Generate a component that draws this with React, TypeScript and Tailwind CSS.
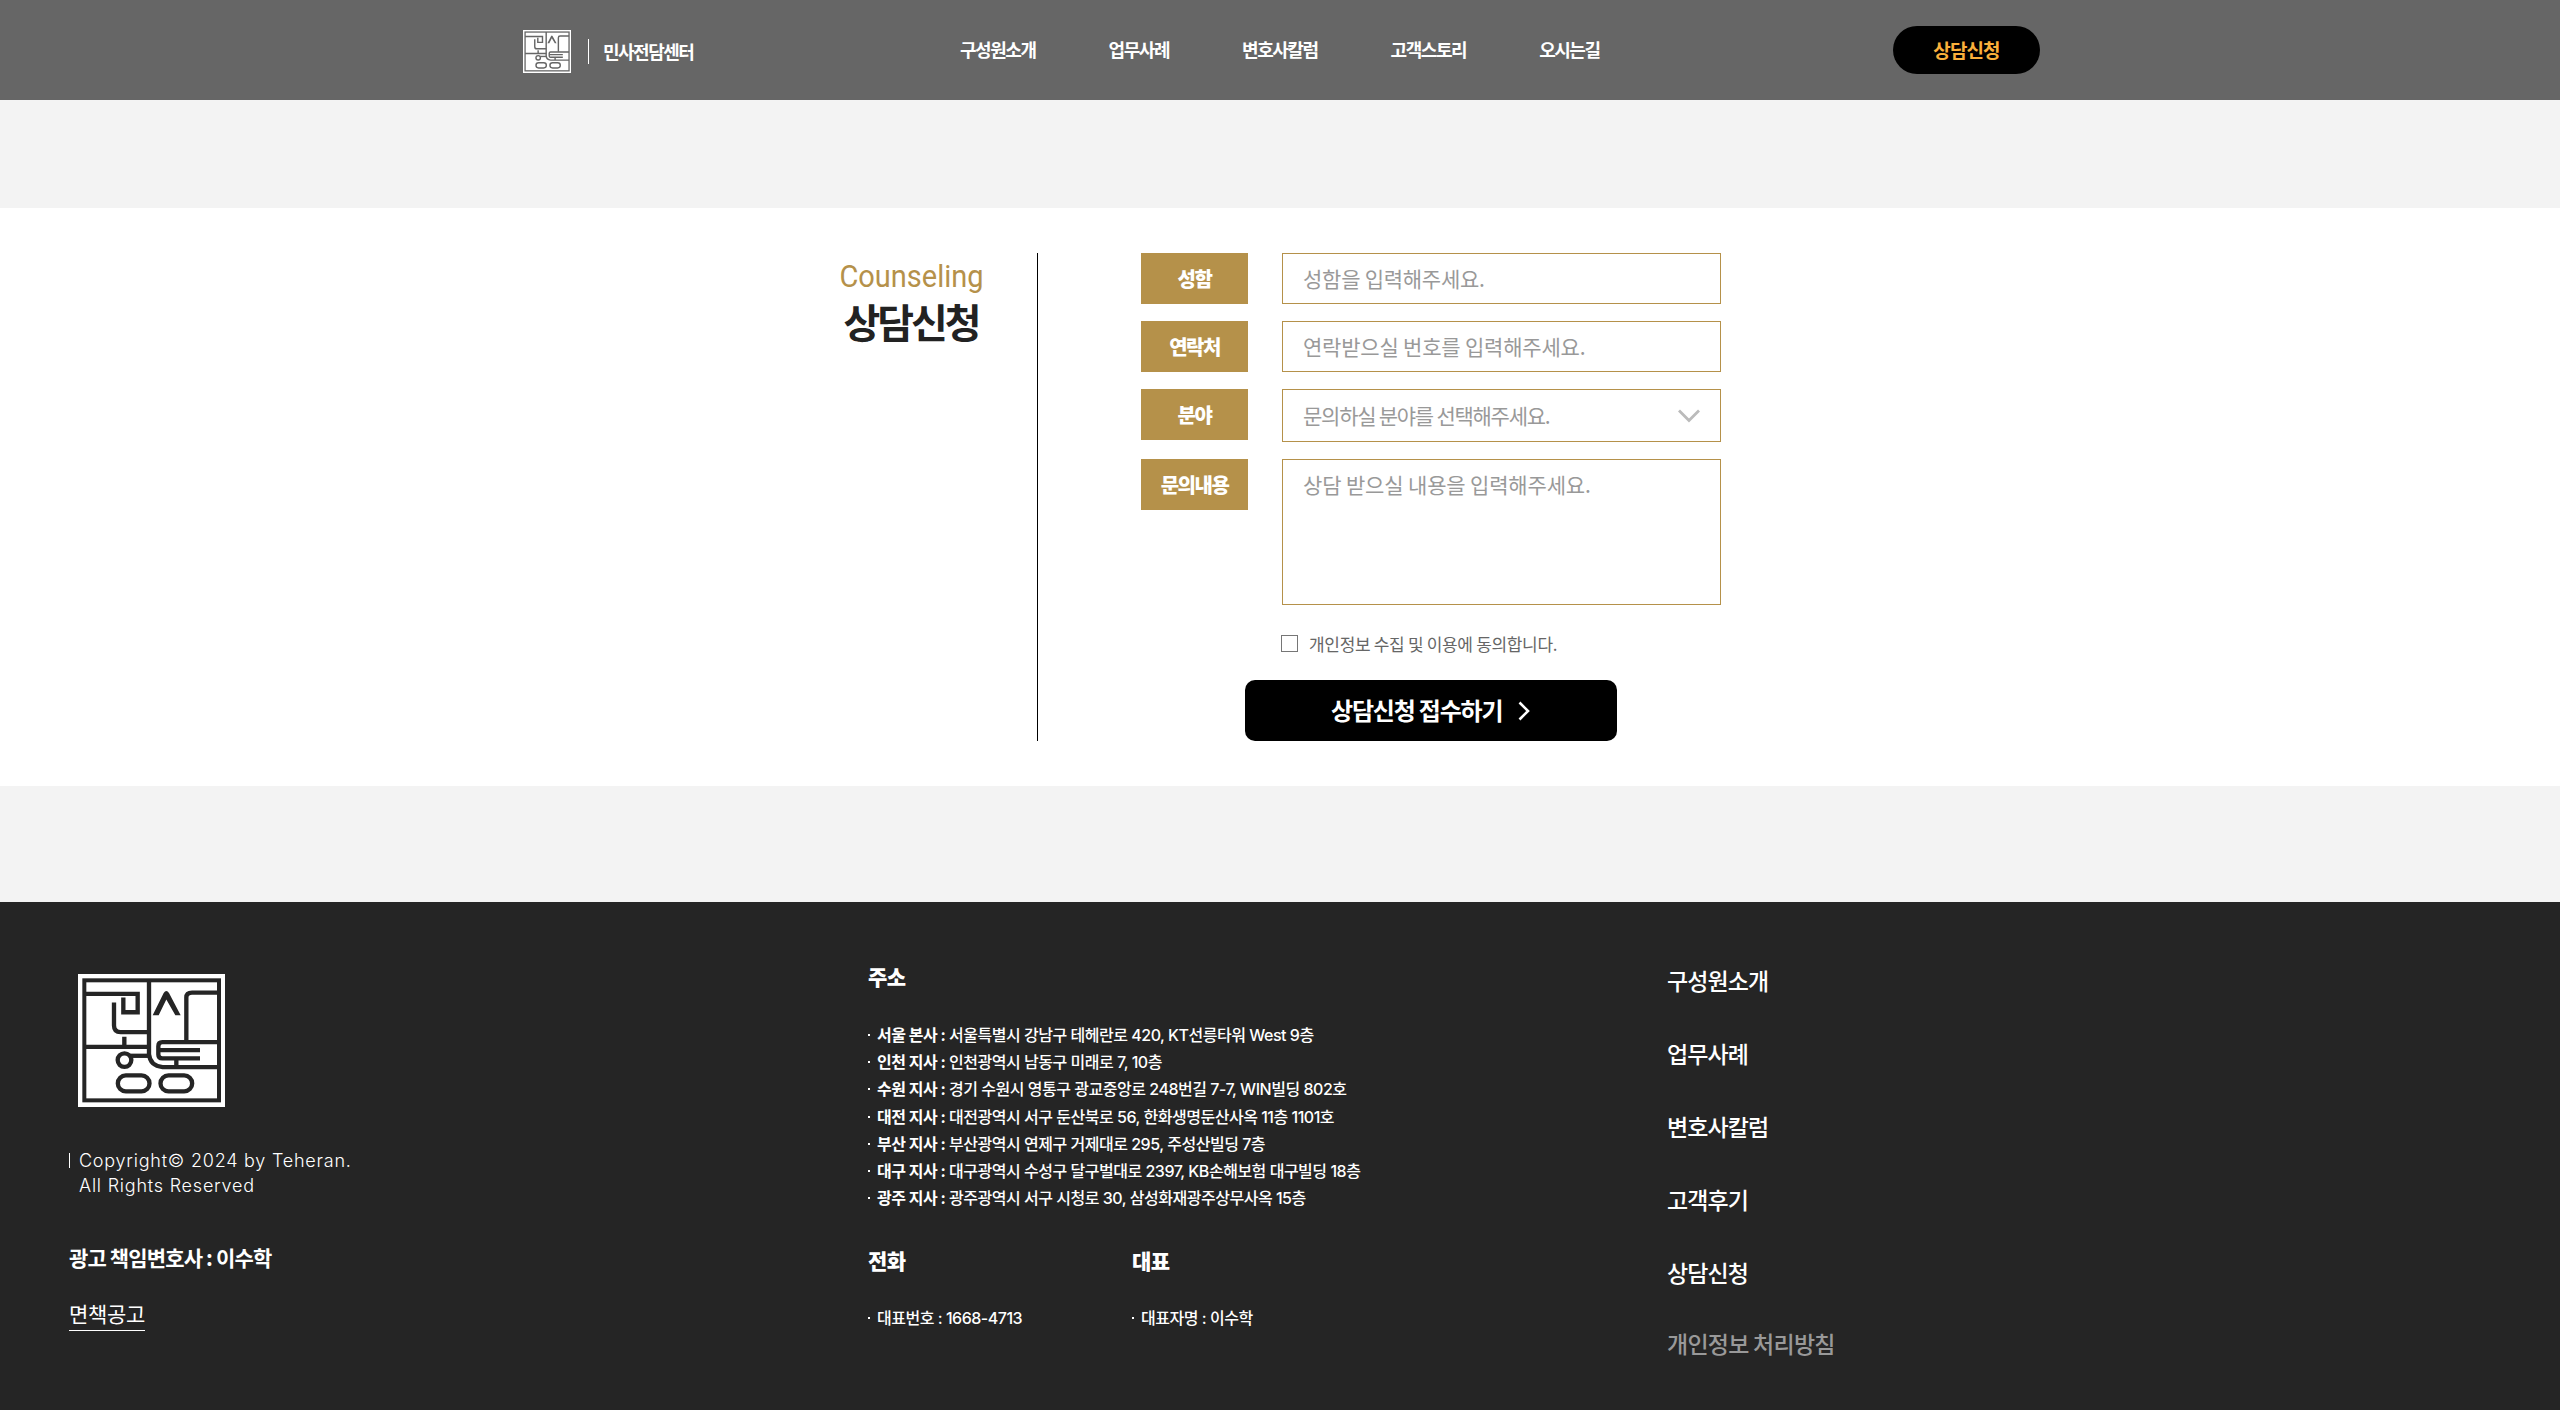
import React from "react";

const kr = "font-['Noto_Sans_CJK_KR',sans-serif]";

function Logo({ className, ink }: { className: string; ink: string }) {
  return (
    <svg viewBox="114 221 441 400" preserveAspectRatio="none" className={className}>
      <rect x="114" y="221" width="441" height="400" fill="#fff" />
      <g fill="none" stroke={ink} strokeWidth="13">
        <rect x="133" y="240" width="404" height="361" strokeWidth="12" />
        <path d="M327 240V462Q330 497 368 501H537" />
        <path d="M133 281H293V336H250V292" />
        <path d="M222 307V376Q222 396 242 396H327" />
        <path d="M253 410V440M133 440H327" />
        <circle cx="253.500" cy="480" r="20.500" />
        <path d="M272 467H329" />
        <rect x="233.500" y="526" width="95" height="48" rx="24" />
        <rect x="361.500" y="526" width="95" height="48" rx="24" />
        <path d="M439 424V292Q439 277 456 277H537" />
        <path d="M537 426H367Q355 426 355 438V463Q355 475 367 475H480M360 450H480M409 475V501" />
      </g>
      <path d="M338 345L371 278Q379 266 387 278L422 345H406L379 298L356 345Z" fill={ink} />
    </svg>
  );
}

function Header() {
  return (
    <header className="flex h-[100px] items-center bg-[#666666] pl-[523px] text-white">
      <div className="flex w-[437px] items-center pt-[3px]">
        <Logo className="h-[43px] w-12" ink="#666666" />
        <span className="ml-[17px] h-[25px] w-px bg-white" />
        <span className="ml-[14px] pb-[2px] text-[18px] leading-6 font-bold tracking-[-1.5px]">민사전담센터</span>
      </div>
      <nav className="flex w-[933px] gap-[73px] pb-[3px] text-[18px] leading-6 font-bold tracking-[-1.45px]">
        {["구성원소개", "업무사례", "변호사칼럼", "고객스토리", "오시는길"].map((t) => (
          <a key={t} className="whitespace-nowrap">{t}</a>
        ))}
      </nav>
      <a className="flex h-12 w-[147px] items-center justify-center rounded-full bg-black text-[19px] font-bold tracking-[-0.9px] text-[#fbb03b]">
        상담신청
      </a>
    </header>
  );
}

function Label({ children }: { children: React.ReactNode }) {
  return (
    <div className="flex h-[51px] w-[107px] shrink-0 items-center justify-center bg-[#b5914a] text-[20px] font-black tracking-[-1.5px] text-white">
      {children}
    </div>
  );
}

function Counseling() {
  const box = "w-[439px] border border-[#b5914a] pl-[20px] text-[21px] leading-[30px] text-[#999999]";
  return (
    <section className="mt-[108px] flex h-[578px] bg-white pt-[45px] pl-[786px]">
      <div className="w-[251px] pt-[2px] text-center">
        <p className="scale-x-[0.935] font-[Roboto,sans-serif] text-[31px] leading-[44px] text-[#b5914a]">Counseling</p>
        <h2 className="-mt-[2px] pr-px text-[40px] leading-[48px] font-bold tracking-[-3.1px] text-[#222222]">상담신청</h2>
      </div>
      <div className="h-[488px] w-px bg-black" />
      <div className="ml-[103px] w-[580px]">
        <div className="flex gap-[34px]">
          <Label>성함</Label>
          <div className={`${box} h-[51px] pt-[9px] tracking-[-0.25px]`}>성함을 입력해주세요.</div>
        </div>
        <div className="mt-[17px] flex gap-[34px]">
          <Label>연락처</Label>
          <div className={`${box} h-[51px] pt-[9px] tracking-[-0.2px]`}>연락받으실 번호를 입력해주세요.</div>
        </div>
        <div className="mt-[17px] flex gap-[34px]">
          <Label>분야</Label>
          <div className={`${box} flex h-[53px] items-center justify-between pr-5 tracking-[-1.25px]`}>
            <span className="pb-px">문의하실 분야를 선택해주세요.</span>
            <svg viewBox="0 0 22 14" className="h-[14px] w-[22px]" fill="none" stroke="#bbbbbb" strokeWidth="2.800">
              <path d="M1 1.500L11 11.500L21 1.500" />
            </svg>
          </div>
        </div>
        <div className="mt-[17px] flex gap-[34px]">
          <Label>문의내용</Label>
          <div className={`${box} h-[146px] pt-[9px] tracking-[-0.15px]`}>상담 받으실 내용을 입력해주세요.</div>
        </div>
        <div className="mt-[27px] ml-[140px] flex h-[23px] items-center gap-[11px]">
          <span className="h-[17px] w-[17px] border border-[#767676] bg-white" />
          <span className="text-[17px] leading-[23px] tracking-[-0.32px] text-[#666666]">개인정보 수집 및 이용에 동의합니다.</span>
        </div>
        <button className="mt-[25px] ml-[104px] flex h-[61px] w-[372px] items-center rounded-[10px] bg-black pl-[86px] text-[24px] font-bold tracking-[-1.2px] text-white">
          <span className="pb-px">상담신청 접수하기</span>
          <svg viewBox="0 0 12 20" className="ml-4 h-5 w-3" fill="none" stroke="#fff" strokeWidth="2.600">
            <path d="M1.500 1.500L10 10L1.500 18.500" />
          </svg>
        </button>
      </div>
    </section>
  );
}

const offices = [
  ["서울 본사 :", "서울특별시 강남구 테헤란로 420, KT선릉타워 West 9층"],
  ["인천 지사 :", "인천광역시 남동구 미래로 7, 10층"],
  ["수원 지사 :", "경기 수원시 영통구 광교중앙로 248번길 7-7, WIN빌딩 802호"],
  ["대전 지사 :", "대전광역시 서구 둔산북로 56, 한화생명둔산사옥 11층 1101호"],
  ["부산 지사 :", "부산광역시 연제구 거제대로 295, 주성산빌딩 7층"],
  ["대구 지사 :", "대구광역시 수성구 달구벌대로 2397, KB손해보험 대구빌딩 18층"],
  ["광주 지사 :", "광주광역시 서구 시청로 30, 삼성화재광주상무사옥 15층"],
];

function Dot() {
  return <span className="mr-[7px] h-0.5 w-0.5 bg-white" />;
}

function Footer() {
  const small = "font-[Inter,'Noto_Sans_CJK_KR',sans-serif] text-[16px] font-medium tracking-[-0.48px]";
  const head = "text-[21px] leading-[30px] font-black tracking-[-0.6px]";
  return (
    <footer className="mt-[116px] flex h-[508px] bg-[#252525] pl-[69px] text-white">
      <div className="w-[799px] pt-[72px]">
        <Logo className="ml-[9px] h-[133px] w-[147px]" ink="#252525" />
        <div className="mt-[41px] flex">
          <span className="mt-[5px] h-[15px] w-px bg-white" />
          <p className="ml-[9px] font-[Inter,sans-serif] text-[18px] leading-[25px] font-light tracking-[0.77px]">
            Copyright© 2024 by Teheran.
            <br />
            All Rights Reserved
          </p>
        </div>
        <p className="mt-[44px] text-[21px] leading-[30px] font-bold tracking-[-0.85px]">광고 책임변호사 : 이수학</p>
        <a className="mt-[24px] inline-block border-b border-white text-[21px] leading-[34px] tracking-[-0.3px]">면책공고</a>
      </div>
      <div className="w-[799px] pt-[59px]">
        <h3 className={head}>주소</h3>
        <ul className="mt-[30px]">
          {offices.map(([name, address]) => (
            <li key={name} className={`flex h-[27.300px] items-center whitespace-nowrap ${small}`}>
              <Dot />
              <strong className="w-[72px] font-bold">{name}</strong>
              <span>{address}</span>
            </li>
          ))}
        </ul>
        <div className="mt-[33px] flex">
          <div className="w-[264px]">
            <h3 className={head}>전화</h3>
            <p className={`mt-[29px] flex h-[27px] items-center ${small}`}><Dot />대표번호 : 1668-4713</p>
          </div>
          <div>
            <h3 className={head}>대표</h3>
            <p className={`mt-[29px] flex h-[27px] items-center ${small}`}><Dot />대표자명 : 이수학</p>
          </div>
        </div>
      </div>
      <ul className="pt-[63px] text-[23px] leading-[30px] font-medium tracking-[-0.9px]">
        {["구성원소개", "업무사례", "변호사칼럼", "고객후기", "상담신청"].map((t) => (
          <li key={t} className="h-[73px]">{t}</li>
        ))}
        <li className="-mt-[2px] tracking-[-0.75px] text-[#999999]">개인정보 처리방침</li>
      </ul>
    </footer>
  );
}

export default function App() {
  return (
    <div className={`h-[1410px] w-[2560px] overflow-hidden bg-[#f3f3f3] ${kr}`}>
      <Header />
      <Counseling />
      <Footer />
    </div>
  );
}
